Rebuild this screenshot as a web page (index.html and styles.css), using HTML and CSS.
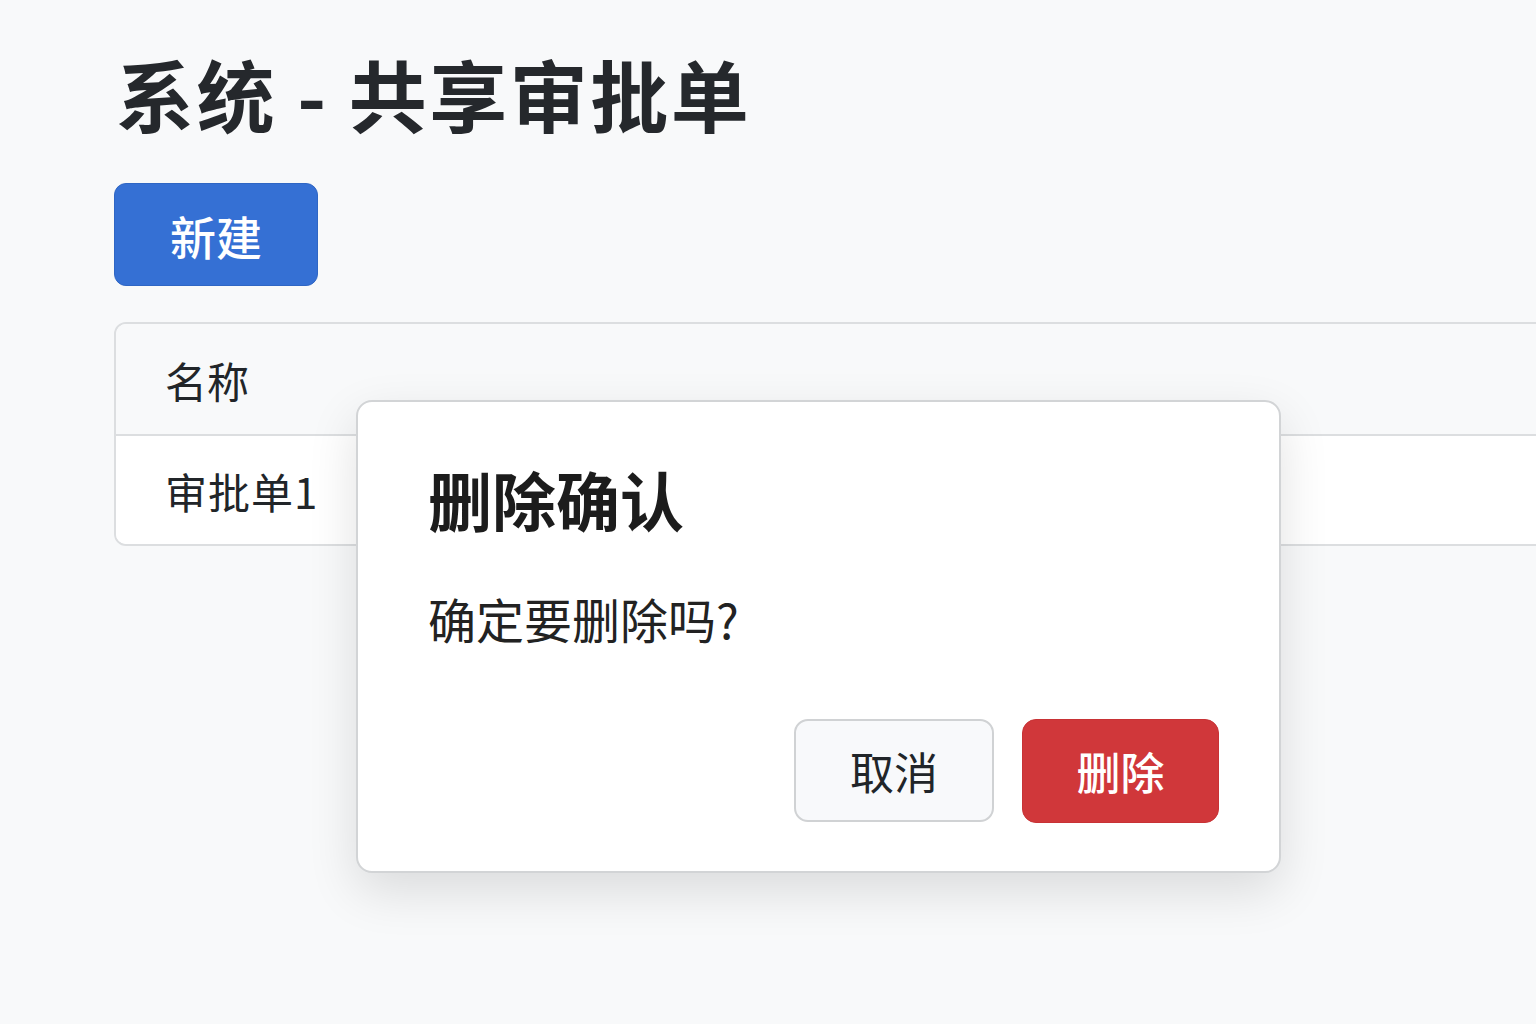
FILE: index.html
```html
<!DOCTYPE html>
<html lang="zh-CN">
<head>
<meta charset="utf-8">
<title>系统 - 共享审批单</title>
<link rel="stylesheet" href="styles.css">
</head>
<body>
<main class="page">
  <h1 class="page-title">系统 - 共享审批单</h1>
  <div class="toolbar">
    <button class="btn btn-primary">新建</button>
  </div>
  <div class="table-card">
    <div class="table-head">名称</div>
    <div class="table-row">审批单1</div>
  </div>
</main>
<div class="modal" role="dialog" aria-modal="true">
  <h2 class="modal-title">删除确认</h2>
  <p class="modal-text">确定要删除吗?</p>
  <div class="modal-actions">
    <button class="btn btn-cancel">取消</button>
    <button class="btn btn-danger">删除</button>
  </div>
</div>
</body>
</html>
```
FILE: styles.css
```css
* { box-sizing: border-box; }
html, body {
  margin: 0;
  padding: 0;
  background: #f8f9fa;
  color: #212529;
  font-family: "Noto Sans CJK SC", "Noto Sans", sans-serif;
  width: 1536px;
  height: 1024px;
  overflow: hidden;
}
.page {
  padding: 54px 0 0 114px;
  display: flex;
  flex-direction: column;
}
.page-title {
  margin: 0 0 0 2px;
  font-size: 78px;
  line-height: 78px;
  font-weight: 700;
  color: #25282c;
  letter-spacing: 2.5px;
}
.toolbar {
  margin-top: 51px;
  display: flex;
}
.btn {
  font-family: inherit;
  border-radius: 12px;
  cursor: pointer;
  display: flex;
  align-items: center;
  justify-content: center;
}
.btn-primary {
  width: 204px;
  height: 103px;
  background: #3570d4;
  border: 1px solid #2f66c4;
  color: #fff;
  font-size: 46px;
  font-weight: 500;
}
.table-card {
  margin-top: 36px;
  width: 1440px;
  border: 2px solid #dcdee0;
  border-radius: 12px;
  background: #fff;
  overflow: hidden;
}
.table-head {
  height: 112px;
  background: #f8f9fa;
  border-bottom: 2px solid #dcdee0;
  padding-left: 49px;
  display: flex;
  align-items: center;
  font-size: 42px;
  color: #212529;
}
.table-row {
  height: 108px;
  background: #fff;
  padding-left: 49px;
  display: flex;
  align-items: center;
  font-size: 42px;
  color: #212529;
  letter-spacing: 1px;
}
.modal {
  position: absolute;
  left: 356px;
  top: 400px;
  width: 925px;
  height: 473px;
  background: #fff;
  border: 2px solid #d2d4d6;
  border-radius: 16px;
  box-shadow: 0 18px 50px rgba(0, 0, 0, 0.12);
  padding: 64px 60px 0 70px;
  display: flex;
  flex-direction: column;
}
.modal-title {
  margin: 0;
  font-size: 64px;
  line-height: 64px;
  font-weight: 700;
  color: #1c1c1c;
}
.modal-text {
  margin: 64px 0 0 0;
  font-size: 48px;
  line-height: 48px;
  color: #222;
}
.modal-actions {
  margin-top: 77px;
  display: flex;
  justify-content: flex-end;
  gap: 28px;
}
.btn-cancel {
  width: 200px;
  height: 103px;
  background: #f8f9fb;
  border: 2px solid #d0d2d4;
  border-radius: 14px;
  color: #212529;
  font-size: 44px;
}
.btn-danger {
  width: 197px;
  height: 104px;
  background: #d0373a;
  border: 1px solid #c83235;
  border-radius: 14px;
  color: #fff;
  font-size: 44px;
  font-weight: 500;
}
```
